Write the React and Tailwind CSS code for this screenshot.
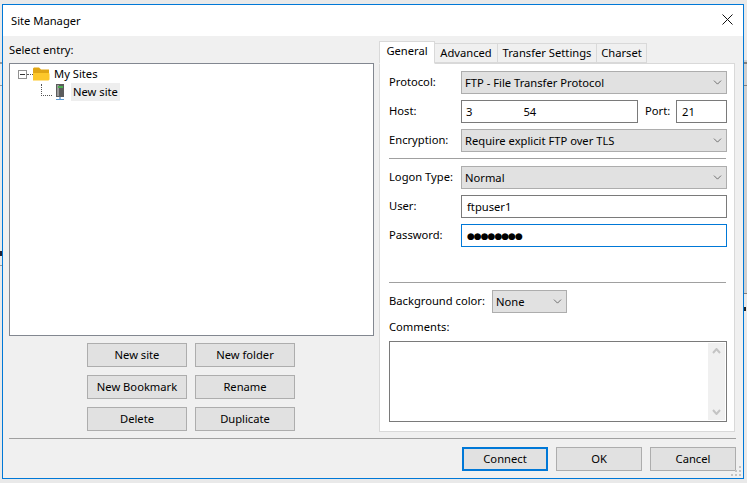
import { ChevronDown } from 'lucide-react'

function Btn({ children, primary }) {
  return (
    <button
      type="button"
      className={`h-6 bg-[#e1e1e1] text-black ${primary ? 'w-[86px] border-2 border-[#0078d7]' : 'border border-[#adadad]'}`}
    >
      {children}
    </button>
  )
}

function Select({ children, className = 'w-[266px]' }) {
  return (
    <div className={`flex h-[23px] items-center justify-between border border-[#adadad] bg-[#e1e1e1] pl-[3px] pr-[2px] ${className}`}>
      <span>{children}</span>
      <ChevronDown size={13} strokeWidth={1.2} className="text-[#333]" />
    </div>
  )
}

function Row({ label, children }) {
  return (
    <div className="flex h-[23px] items-center">
      <span className="w-[72px] shrink-0 pb-[2px]">{label}</span>
      {children}
    </div>
  )
}

function Tab({ children, active, className }) {
  return (
    <div
      className={`flex items-center justify-center border border-[#d9d9d9] ${active ? 'z-10 -mb-px h-[23px] border-b-white bg-white pb-[3px]' : 'h-[20px] border-l-0 bg-[#f0f0f0]'} ${className}`}
    >
      {children}
    </div>
  )
}

function FolderIcon() {
  return (
    <svg width="17" height="14" viewBox="0 0 17 14">
      <path d="M0 1.5 L1 0.5 H6 L8 2.5 H16 V6 H0 Z" fill="#e0a514" />
      <path d="M0 6 H16 L16.500 7 V12.500 L15.500 13.500 H0 Z" fill="#fdc72a" />
    </svg>
  )
}

function ServerIcon() {
  return (
    <svg width="12" height="17" viewBox="0 0 12 17">
      <rect x="2" y="0" width="8" height="13" fill="#5c5c5c" />
      <rect x="3" y="1" width="2" height="11" fill="#9a9a9a" />
      <rect x="4" y="2" width="5" height="2" fill="#4caf50" />
      <rect x="5.500" y="13" width="1" height="3" fill="#2a6fb5" />
      <rect x="2" y="15" width="8" height="1" fill="#5b9bd5" />
    </svg>
  )
}

function SiteTree() {
  return (
    <div className="relative h-[273px] w-[365px] border border-[#828790] bg-white pl-[8px] pt-[1px]">
      <div className="flex h-[18px] items-center">
        <div className="flex h-[9px] w-[9px] items-center justify-center border border-[#919191]">
          <div className="h-px w-[5px] bg-[#333]" />
        </div>
        <div className="w-[6px] border-t border-dotted border-[#555]" />
        <FolderIcon />
        <span className="ml-[4px]">My Sites</span>
      </div>
      <div className="flex h-[18px] items-center pl-[23px]">
        <div className="mr-[2px] mt-[-5px] h-[12px] w-[11px] border-b border-l border-dotted border-[#555]" />
        <ServerIcon />
        <span className="ml-[5px] bg-[#eeeeee] px-[2px] leading-[18px]">New site</span>
      </div>
    </div>
  )
}

function Scrollbar() {
  return (
    <div className="flex w-[17px] flex-col items-center justify-between bg-[#f0f0f0] py-[5px]">
      <svg width="9" height="6" viewBox="0 0 9 6"><path d="M1 5 L4.500 1 L8 5" fill="none" stroke="#c4c4c4" strokeWidth="2" /></svg>
      <svg width="9" height="6" viewBox="0 0 9 6"><path d="M1 1 L4.500 5 L8 1" fill="none" stroke="#c4c4c4" strokeWidth="2" /></svg>
    </div>
  )
}

function ResizeGrip() {
  return (
    <svg width="12" height="12" viewBox="0 0 12 12" className="absolute bottom-0 right-0">
      <g fill="#c4c4c4">
        <rect x="8" y="0" width="2" height="2" />
        <rect x="4" y="4" width="2" height="2" />
        <rect x="8" y="4" width="2" height="2" />
        <rect x="0" y="8" width="2" height="2" />
        <rect x="4" y="8" width="2" height="2" />
        <rect x="8" y="8" width="2" height="2" />
      </g>
    </svg>
  )
}

export default function App() {
  return (
    <div
      className="relative h-[483px] w-[747px] overflow-hidden bg-[#e9e9e9] pl-[2px] pt-[4px] text-[11.2px] leading-[16px] text-black"
      style={{ fontFamily: '"Noto Sans", sans-serif' }}
    >
      {/* bits of the desktop behind the dialog */}
      <div className="absolute left-[744px] top-[60px] h-[233px] w-[3px] bg-[#d0d0d0]" />
      <div className="absolute left-[744px] top-[62px] h-[2px] w-[3px] bg-[#808080]" />
      <div className="absolute left-[744px] top-[85px] h-px w-[3px] bg-[#808080]" />
      <div className="absolute left-[744px] top-[293px] h-px w-[3px] bg-[#808080]" />
      <div className="absolute left-[744px] top-[307px] h-[4px] w-[2px] bg-[#222]" />
      <div className="absolute left-0 top-[62px] h-[2px] w-[2px] bg-[#999]" />
      <div className="absolute left-0 top-[85px] h-px w-[2px] bg-[#999]" />
      <div className="absolute left-0 top-[251px] h-[5px] w-[2px] bg-[#223]" />
      <div className="absolute left-0 top-[265px] h-px w-[2px] bg-[#999]" />

      <div className="relative flex h-[475px] w-[742px] flex-col border border-[#0078d7] bg-[#f0f0f0]">
        <div className="flex h-[31px] items-center justify-between bg-white pl-[8px] pr-[8px]">
          <span>Site Manager</span>
          <svg width="11" height="11" viewBox="0 0 11 11" className="mb-[2px] mr-[2px]">
            <path d="M0.500 0.500 L10.500 10.500 M10.500 0.500 L0.500 10.500" stroke="#111" strokeWidth="1" />
          </svg>
        </div>

        <div className="flex pl-[6px]">
          <div className="flex w-[370px] flex-col">
            <div className="flex h-[27px] items-end pb-[5px]">Select entry:</div>
            <SiteTree />
            <div className="ml-[78px] mt-[7px] grid w-[208px] grid-cols-[100px_100px] gap-x-[8px] gap-y-[8px] self-start">
              <Btn>New site</Btn>
              <Btn>New folder</Btn>
              <Btn>New Bookmark</Btn>
              <Btn>Rename</Btn>
              <Btn>Delete</Btn>
              <Btn>Duplicate</Btn>
            </div>
          </div>

          <div className="flex w-[356px] flex-col pt-[5px]">
            <div className="flex h-[22px] items-end">
              <Tab active className="w-[56px]">General</Tab>
              <Tab className="w-[63px]">Advanced</Tab>
              <Tab className="w-[99px]">Transfer Settings</Tab>
              <Tab className="w-[50px]">Charset</Tab>
            </div>
            <div className="flex h-[369px] flex-col border border-[#d9d9d9] bg-white pl-[9px] pt-[7px]">
              <div className="flex flex-col gap-[6px]">
                <Row label="Protocol:"><Select>FTP - File Transfer Protocol</Select></Row>
                <Row label="Host:">
                  <div className="flex h-[23px] w-[177px] items-center border border-[#7a7a7a] pl-[4px]">
                    <span>3</span>
                    <span className="ml-[51px]">54</span>
                  </div>
                  <span className="ml-[7px] w-[31px] pb-[2px]">Port:</span>
                  <div className="flex h-[23px] w-[51px] items-center border border-[#7a7a7a] pl-[5px]">21</div>
                </Row>
                <Row label="Encryption:"><Select>Require explicit FTP over TLS</Select></Row>
              </div>
              <div className="mb-[7px] mt-[6px] h-px w-[337px] bg-[#a0a0a0]" />
              <div className="flex flex-col gap-[6px]">
                <Row label="Logon Type:"><Select>Normal</Select></Row>
                <Row label="User:">
                  <div className="flex h-[23px] w-[266px] items-center border border-[#7a7a7a] pl-[5px]">ftpuser1</div>
                </Row>
                <Row label="Password:">
                  <div
                    className="flex h-[23px] w-[266px] items-center border border-[#0078d7] pl-[5px] text-[9px] tracking-[-1px]"
                    style={{ fontFamily: '"DejaVu Sans", sans-serif' }}
                  >
                    ●●●●●●●●
                  </div>
                </Row>
              </div>
              <div className="mb-[7px] mt-[35px] h-px w-[337px] bg-[#a0a0a0]" />
              <div className="flex h-[23px] items-center">
                <span className="w-[103px] shrink-0 pb-[2px]">Background color:</span>
                <Select className="w-[75px]">None</Select>
              </div>
              <div className="mt-[5px] h-[23px] leading-[18px]">Comments:</div>
              <div className="flex h-[81px] w-[338px] justify-end border border-[#7a7a7a] p-px">
                <Scrollbar />
              </div>
            </div>
          </div>
        </div>

        <div className="ml-[6px] mt-[6px] h-px w-[727px] bg-[#a0a0a0]" />
        <div className="mt-[8px] flex justify-end gap-[8px] pr-[7px]">
          <Btn primary>Connect</Btn>
          <button type="button" className="h-6 w-[86px] border border-[#adadad] bg-[#e1e1e1]">OK</button>
          <button type="button" className="h-6 w-[86px] border border-[#adadad] bg-[#e1e1e1]">Cancel</button>
        </div>
        <ResizeGrip />
      </div>
    </div>
  )
}
